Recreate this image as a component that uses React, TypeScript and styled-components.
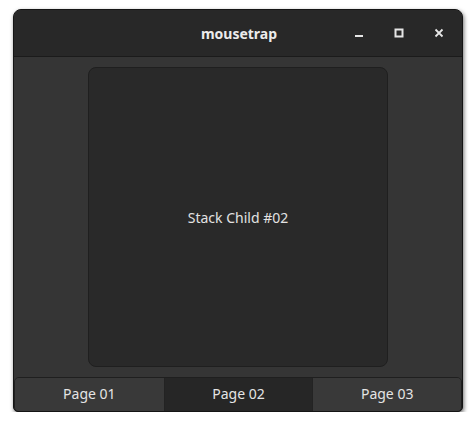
import React, { useState } from 'react';
import styled, { createGlobalStyle } from 'styled-components';

const GlobalStyle = createGlobalStyle`
  html, body {
    margin: 0;
    padding: 0;
    background: #ffffff;
  }
  body {
    font-family: "Noto Sans", "Open Sans", sans-serif;
  }
`;

const Page = styled.div`
  padding: 9px 0 0 13px;
`;

const Window = styled.div`
  width: 450px;
  height: 403px;
  box-sizing: border-box;
  display: flex;
  flex-direction: column;
  background: #353535;
  border: 1px solid #151515;
  border-radius: 8px 8px 5px 5px;
  box-shadow: 1px 2px 4px rgba(0, 0, 0, 0.55);
  overflow: hidden;
`;

const HeaderBar = styled.div`
  height: 46px;
  flex: none;
  display: flex;
  align-items: center;
  justify-content: center;
  position: relative;
  background: #282828;
  border-bottom: 1px solid #1b1b1b;
`;

const Title = styled.div`
  color: #ececec;
  font-weight: 700;
  font-size: 14px;
  margin-left: 2px;
  margin-top: 1px;
`;

const Controls = styled.div`
  position: absolute;
  right: 3px;
  top: 0;
  height: 100%;
  display: flex;
  align-items: center;
`;

const ControlButton = styled.div`
  width: 40px;
  height: 32px;
  display: flex;
  align-items: center;
  justify-content: center;
  color: #e6e6e6;
`;

const Content = styled.div`
  flex: 1;
  display: flex;
  justify-content: center;
  padding-top: 10px;
`;

const StackChild = styled.div`
  width: 300px;
  height: 300px;
  box-sizing: border-box;
  display: flex;
  align-items: center;
  justify-content: center;
  background: #292929;
  border: 1px solid #1f1f1f;
  border-radius: 8px;
  color: #e2e2e2;
  font-size: 14px;
`;

const Switcher = styled.div`
  flex: none;
  display: grid;
  grid-template-columns: repeat(3, 1fr);
  margin-top: 10px;
  height: 35px;
  box-sizing: border-box;
  border: 1px solid #1f1f1f;
  border-radius: 5px;
  overflow: hidden;
`;

const Tab = styled.div<{ $active: boolean }>`
  display: flex;
  align-items: center;
  justify-content: center;
  padding-bottom: 2px;
  background: ${p => (p.$active ? '#262626' : '#393939')};
  color: #e4e4e4;
  font-size: 14px;
  border-left: 1px solid #232323;
  &:first-child {
    border-left: none;
  }
`;

const pages = ['Page 01', 'Page 02', 'Page 03'];

export default function App() {
  const [active, setActive] = useState(1);
  return (
    <>
      <GlobalStyle />
      <Page>
        <Window>
          <HeaderBar>
            <Title>mousetrap</Title>
            <Controls>
              <ControlButton>
                <svg width="10" height="10" viewBox="0 0 10 10">
                  <rect x="1" y="7" width="8" height="2" fill="currentColor" />
                </svg>
              </ControlButton>
              <ControlButton>
                <svg width="10" height="10" viewBox="0 0 10 10">
                  <rect x="1.5" y="1.5" width="7" height="7" fill="none" stroke="currentColor" strokeWidth="2" />
                </svg>
              </ControlButton>
              <ControlButton>
                <svg width="10" height="10" viewBox="0 0 10 10">
                  <path d="M1.5 1.5 L8.5 8.5 M8.5 1.5 L1.5 8.5" stroke="currentColor" strokeWidth="1.8" />
                </svg>
              </ControlButton>
            </Controls>
          </HeaderBar>
          <Content>
            <StackChild>Stack Child #0{active + 1}</StackChild>
          </Content>
          <Switcher>
            {pages.map((p, i) => (
              <Tab key={p} $active={i === active} onClick={() => setActive(i)}>
                {p}
              </Tab>
            ))}
          </Switcher>
        </Window>
      </Page>
    </>
  );
}
